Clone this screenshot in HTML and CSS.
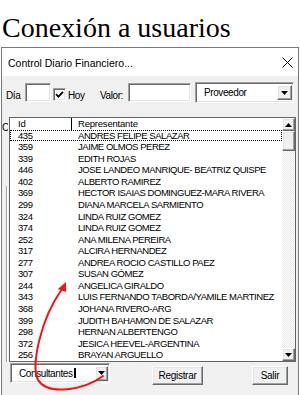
FILE: index.html
```html
<!DOCTYPE html>
<html lang="es">
<head>
    <meta charset="UTF-8">
    <meta name="viewport" content="width=device-width, initial-scale=1.0">
    <title>Conexión a usuarios</title>
    <link rel="stylesheet" href="styles.css">
</head>
<body>
    <h1 class="page-title">Conexión a usuarios</h1>

    <div class="dialog">
        <div class="titlebar">
            <span class="titlebar-text">Control Diario Financiero...</span>
            <svg class="close-icon" width="11" height="11" viewBox="0 0 11 11">
                <path d="M0.5 0.5 L10.5 10.5 M10.5 0.5 L0.5 10.5" stroke="#000" stroke-width="1" fill="none"/>
            </svg>
        </div>

        <div class="form">
            <span class="hidden-label">C</span>
            <div class="back-frame"></div>

            <div class="top-row">
                <label class="lbl lbl-dia">Día</label>
                <div class="textbox tb-dia"></div>
                <div class="checkbox">
                    <svg width="9" height="9" viewBox="0 0 9 9">
                        <path d="M1 4.2 L3.4 6.6 L8 1.8" stroke="#000" stroke-width="1.8" fill="none"/>
                    </svg>
                </div>
                <label class="lbl lbl-hoy">Hoy</label>
                <label class="lbl lbl-valor">Valor:</label>
                <div class="textbox tb-valor"></div>
                <div class="combo combo-prov">
                    <span class="combo-text">Proveedor</span>
                    <span class="drop-btn">
                        <svg width="7" height="4" viewBox="0 0 7 4"><path d="M0 0 H7 L3.5 4 Z" fill="#000"/></svg>
                    </span>
                </div>
            </div>

            <div class="listbox">
                <div class="list-body">
                    <div class="list-head"><span class="col-id">Id</span><span class="col-name">Representante</span></div>
                    <div class="list-row focused"><span class="col-id">435</span><span class="col-name">ANDRES FELIPE SALAZAR</span></div>
                    <div class="list-row"><span class="col-id">359</span><span class="col-name">JAIME OLMOS PEREZ</span></div>
                    <div class="list-row"><span class="col-id">339</span><span class="col-name">EDITH ROJAS</span></div>
                    <div class="list-row"><span class="col-id">446</span><span class="col-name">JOSE LANDEO MANRIQUE- BEATRIZ QUISPE</span></div>
                    <div class="list-row"><span class="col-id">402</span><span class="col-name">ALBERTO RAMIREZ</span></div>
                    <div class="list-row"><span class="col-id">369</span><span class="col-name">HECTOR ISAIAS DOMINGUEZ-MARA RIVERA</span></div>
                    <div class="list-row"><span class="col-id">299</span><span class="col-name">DIANA MARCELA SARMIENTO</span></div>
                    <div class="list-row"><span class="col-id">324</span><span class="col-name">LINDA RUIZ GOMEZ</span></div>
                    <div class="list-row"><span class="col-id">374</span><span class="col-name">LINDA RUIZ GOMEZ</span></div>
                    <div class="list-row"><span class="col-id">252</span><span class="col-name">ANA MILENA PEREIRA</span></div>
                    <div class="list-row"><span class="col-id">317</span><span class="col-name">ALCIRA HERNANDEZ</span></div>
                    <div class="list-row"><span class="col-id">277</span><span class="col-name">ANDREA ROCIO CASTILLO PAEZ</span></div>
                    <div class="list-row"><span class="col-id">307</span><span class="col-name">SUSAN GÓMEZ</span></div>
                    <div class="list-row"><span class="col-id">244</span><span class="col-name">ANGELICA GIRALDO</span></div>
                    <div class="list-row"><span class="col-id">343</span><span class="col-name">LUIS FERNANDO TABORDA/YAMILE MARTINEZ</span></div>
                    <div class="list-row"><span class="col-id">368</span><span class="col-name">JOHANA RIVERO-ARG</span></div>
                    <div class="list-row"><span class="col-id">399</span><span class="col-name">JUDITH BAHAMON DE SALAZAR</span></div>
                    <div class="list-row"><span class="col-id">298</span><span class="col-name">HERNAN ALBERTENGO</span></div>
                    <div class="list-row"><span class="col-id">372</span><span class="col-name">JESICA HEEVEL-ARGENTINA</span></div>
                    <div class="list-row"><span class="col-id">256</span><span class="col-name">BRAYAN ARGUELLO</span></div>
                </div>
                <div class="scrollbar">
                    <div class="sb-btn">
                        <svg width="7" height="4" viewBox="0 0 7 4"><path d="M0 4 H7 L3.5 0 Z" fill="#000"/></svg>
                    </div>
                    <div class="sb-thumb"></div>
                    <div class="sb-track"></div>
                    <div class="sb-btn">
                        <svg width="7" height="4" viewBox="0 0 7 4"><path d="M0 0 H7 L3.5 4 Z" fill="#000"/></svg>
                    </div>
                </div>
            </div>

            <div class="bottom-row">
                <div class="combo combo-cons">
                    <span class="combo-text">Consultantes</span>
                    <span class="text-caret"></span>
                    <span class="drop-btn">
                        <svg width="7" height="4" viewBox="0 0 7 4"><path d="M0 0 H7 L3.5 4 Z" fill="#000"/></svg>
                    </span>
                </div>
                <button class="btn btn-registrar">Registrar</button>
                <button class="btn btn-salir">Salir</button>
            </div>
        </div>
    </div>

    <!-- red annotation arrow drawn over the screenshot -->
    <svg class="annotation" width="300" height="395" viewBox="0 0 300 395">
        <path d="M103 376 C 84 390, 48 396, 38 380 C 31 366, 40 320, 62 289" stroke="#f01414" stroke-width="2" fill="none" stroke-linecap="round"/>
        <path d="M66 282 L58 289 L66 292 Z" fill="#f01414"/>
    </svg>
</body>
</html>
```

FILE: styles.css
```css
html, body {
    margin: 0;
    height: 395px;
    overflow: hidden;
}
body {
    position: relative;
    background-color: #ffffff;
    font-family: "Liberation Sans", Arial, sans-serif;
    color: #000000;
}
.page-title {
    font-family: "Liberation Serif", "Times New Roman", serif;
    font-weight: normal;
    font-size: 28px;
    line-height: 32px;
    margin: 12px 0 3px 2px;
}
.dialog {
    width: 298px;
    margin-left: 1px;
    border: 1px solid #7a7a7a;
    box-sizing: border-box;
}
.titlebar {
    height: 28px;
    background-color: #ffffff;
    display: flex;
    align-items: center;
    justify-content: space-between;
    padding: 0 5px 0 6px;
    font-size: 10.5px;
}
.titlebar-text {
    margin-top: 1px;
}
.form {
    position: relative;
    background-color: #f0f0f0;
    padding-top: 6px;
    height: 340px;
    font-size: 10px;
    letter-spacing: -0.4px;
}
.hidden-label {
    position: absolute;
    left: 0;
    top: 46px;
    width: 6px;
    overflow: hidden;
}
.back-frame {
    position: absolute;
    left: 4px;
    top: 110px;
    width: 20px;
    height: 176px;
    border-left: 1px solid #a0a0a0;
    box-shadow: inset 1px 0 0 #ffffff;
}

/* sunken / raised win32 borders */
.textbox, .combo, .checkbox {
    box-sizing: border-box;
    background-color: #ffffff;
    border: 1px solid;
    border-color: #a0a0a0 #ffffff #ffffff #a0a0a0;
    box-shadow: inset 1px 1px 0 #696969, inset -1px -1px 0 #e3e3e3;
}
.drop-btn, .sb-btn, .sb-thumb, .btn {
    box-sizing: border-box;
    background-color: #f0f0f0;
    border: 1px solid;
    border-color: #ffffff #696969 #696969 #ffffff;
    box-shadow: inset -1px -1px 0 #a0a0a0, inset 1px 1px 0 #e3e3e3;
}

.top-row {
    display: flex;
    align-items: flex-start;
    height: 21px;
    padding-left: 4px;
}
.lbl {
    line-height: 13px;
    margin-top: 7px;
    flex-shrink: 0;
}
.lbl-dia {
    width: 19px;
}
.tb-dia {
    width: 26px;
    height: 19px;
    margin-top: 1px;
}
.checkbox {
    width: 13px;
    height: 13px;
    margin: 6px 0 0 2px;
    display: flex;
    align-items: center;
    justify-content: center;
}
.lbl-hoy {
    width: 32px;
    margin-left: 2px;
}
.lbl-valor {
    width: 28px;
}
.tb-valor {
    width: 63px;
    height: 19px;
    margin-top: 1px;
}
.combo {
    display: flex;
    align-items: center;
}
.combo-prov {
    width: 99px;
    height: 21px;
    margin-left: 4px;
}
.combo-prov .combo-text {
    padding-left: 8px;
    flex: 1;
}
.drop-btn {
    width: 15px;
    height: 15px;
    display: flex;
    align-items: center;
    justify-content: center;
    margin-right: 1px;
}

.listbox {
    display: flex;
    width: 287px;
    height: 245px;
    margin: 14px 0 0 7px;
    box-sizing: border-box;
    border: 1px solid #646464;
    background-color: #ffffff;
}
.list-body {
    flex: 1;
    min-width: 0;
    overflow: hidden;
    font-size: 9.5px;
    letter-spacing: -0.45px;
}
.list-head, .list-row {
    display: flex;
    height: 11.57px;
    line-height: 11.57px;
    white-space: nowrap;
    box-sizing: border-box;
}
.list-head {
    letter-spacing: -0.2px;
}
.col-id {
    flex-shrink: 0;
    width: 62px;
    padding-left: 8px;
    box-sizing: border-box;
}
.list-head .col-id {
    border-right: 1px solid #000000;
}
.col-name {
    padding-left: 6px;
}
.list-row.focused {
    outline: 1px dotted #000000;
    outline-offset: -1px;
}
.scrollbar {
    width: 13px;
    flex-shrink: 0;
    display: flex;
    flex-direction: column;
    background-color: #f4f4f4;
    background-image: repeating-conic-gradient(#ffffff 0 25%, #e6e6e6 0 50%);
    background-size: 2px 2px;
}
.sb-btn {
    height: 13px;
    display: flex;
    align-items: center;
    justify-content: center;
}
.sb-thumb {
    height: 20px;
}
.sb-track {
    flex: 1;
}

.bottom-row {
    display: flex;
    align-items: flex-start;
    padding-left: 8px;
    margin-top: 1px;
}
.combo-cons {
    width: 100px;
    height: 20px;
}
.combo-cons .combo-text {
    padding-left: 8px;
}
.text-caret {
    width: 2px;
    height: 10px;
    margin-left: 1px;
    background-color: #000000;
}
.combo-cons .drop-btn {
    width: 13px;
    margin-left: auto;
}
.btn {
    height: 19px;
    margin-top: 3px;
    padding: 0;
    font-family: "Liberation Sans", Arial, sans-serif;
    font-size: 10px;
    letter-spacing: -0.3px;
    color: #000000;
}
.btn-registrar {
    width: 51px;
    margin-left: 42px;
}
.btn-salir {
    width: 36px;
    margin-left: 49px;
}

.annotation {
    position: absolute;
    left: 0;
    top: 0;
    pointer-events: none;
}
```
